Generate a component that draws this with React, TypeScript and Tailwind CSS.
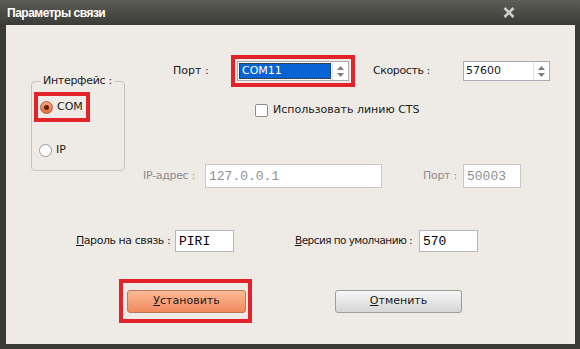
import React from 'react';

const Field: React.FC<{ value: string; className: string; disabled?: boolean }> = ({ value, className, disabled }) => (
  <div
    className={`flex items-center pl-[3px] bg-white border font-['Liberation_Mono',monospace] text-[13px] leading-none ${
      disabled ? 'border-[#c9c9c9] text-[#8f8f8f]' : 'border-[#b4b7bb] text-black'
    } ${className}`}
  >
    {value}
  </div>
);

const Spinner: React.FC = () => (
  <div className="flex flex-col items-center justify-center gap-[3px] w-[16px] h-full border-l border-[#e3e3e3]">
    <svg width="7" height="4" viewBox="0 0 7 4">
      <path d="M0 4 L3.5 0 L7 4 Z" fill="#7d7d7d" />
    </svg>
    <svg width="7" height="4" viewBox="0 0 7 4">
      <path d="M0 0 L3.5 4 L7 0 Z" fill="#7d7d7d" />
    </svg>
  </div>
);

const App: React.FC = () => {
  return (
    <div className="w-[580px] h-[349px] flex flex-col bg-[#3a3a36] font-['DejaVu_Sans',sans-serif] text-[11px] text-[#1a1a1a] whitespace-nowrap">
      {/* title bar */}
      <div className="h-[25px] flex items-center justify-between pl-[7px] pr-[65px] bg-gradient-to-b from-[#5d5d58] to-[#3b3b37]">
        <span className="text-white font-bold text-[12px] tracking-[-0.5px] font-['Liberation_Sans',sans-serif]">Параметры связи</span>
        <svg width="12" height="11" viewBox="0 0 12 11">
          <path d="M1.5 1 L10.5 10 M10.5 1 L1.5 10" stroke="#cfcfcf" strokeWidth="2.6" />
        </svg>
      </div>

      <div className="ml-[6px] w-[569px] h-[319px] bg-[#eeebe6] pt-[30px]">
        {/* top section */}
        <div className="flex">
          {/* interface group */}
          <div className="relative ml-[25px] mt-[26px] w-[94px] h-[90px] border border-[#c7c4bf] rounded-[4px] shrink-0">
            <span className="absolute -top-[8px] left-[9px] px-[2px] bg-[#eeebe6] leading-[14px] tracking-[-0.3px]">Интерфейс :</span>
            <div className="ml-[2px] mt-[10px] w-[56px] h-[30px] border-[4px] border-[#e2232a] flex items-center pl-[2px]">
              <span className="w-[13px] h-[13px] rounded-full border border-[#b3593a] bg-gradient-to-b from-[#f6a57e] to-[#e46d3e] flex items-center justify-center">
                <span className="w-[5px] h-[5px] rounded-full bg-[#5e2410]" />
              </span>
              <span className="ml-[4px]">COM</span>
            </div>
            <div className="ml-[7px] mt-[20px] flex items-center">
              <span className="w-[13px] h-[13px] rounded-full border border-[#9a9a9a] bg-white" />
              <span className="ml-[4px]">IP</span>
            </div>
          </div>

          {/* right column */}
          <div className="flex flex-col">
            <div className="flex items-center h-[32px]">
              <span className="ml-[48px] w-[58px]">Порт :</span>
              <div className="w-[124px] h-[32px] border-[4px] border-[#e2232a] p-[2px]">
                <div className="flex h-full bg-white border border-[#a9adb3]">
                  <div className="flex-1 p-[1px]">
                    <div className="h-full bg-[#0a63d2] border border-dotted border-[#1d2d44] text-white flex items-center pl-[2px]">
                      COM11
                    </div>
                  </div>
                  <Spinner />
                </div>
              </div>
              <span className="ml-[18px] w-[90px] tracking-[-0.4px]">Скорость :</span>
              <div className="flex w-[87px] h-[20px] bg-white border border-[#a9adb3]">
                <span className="flex-1 flex items-center pl-[2px]">57600</span>
                <Spinner />
              </div>
            </div>

            <div className="flex items-center ml-[130px] mt-[17px] h-[13px]">
              <span className="w-[13px] h-[13px] rounded-[2px] border border-[#8e8e8e] bg-white" />
              <span className="ml-[5px]">Использовать линию CTS</span>
            </div>

            <div className="flex items-center ml-[18px] mt-[47px] text-[#8d8d8d]">
              <span className="w-[62px] tracking-[-0.3px]">IP-адрес :</span>
              <Field value="127.0.0.1" disabled className="w-[177px] h-[24px]" />
              <span className="ml-[41px] w-[40px] tracking-[-0.3px]">Порт :</span>
              <Field value="50003" disabled className="w-[58px] h-[24px]" />
            </div>
          </div>
        </div>

        {/* password row */}
        <div className="flex items-center mt-[42px] pl-[70px]">
          <span className="w-[99px] tracking-[-0.45px]">
            <span className="underline">П</span>ароль на связь :
          </span>
          <Field value="PIRI" className="w-[59px] h-[22px]" />
          <span className="ml-[61px] w-[124px] text-[10.5px] tracking-[-0.55px]">
            <span className="underline">В</span>ерсия по умолчанию :
          </span>
          <Field value="570" className="w-[59px] h-[22px]" />
        </div>

        {/* buttons */}
        <div className="flex items-center mt-[27px] ml-[113px]">
          <div className="w-[133px] h-[44px] border-[4px] border-[#e2232a] pl-[4px] pr-[2px] pt-[7px] pb-[6px]">
            <button className="w-full h-full rounded-[3px] border border-[#b9785c] bg-gradient-to-b from-[#fbb995] to-[#f08a5d] flex items-center justify-center">
              <span><span className="underline">У</span>становить</span>
            </button>
          </div>
          <button className="ml-[83px] w-[127px] h-[23px] rounded-[3px] border border-[#9c9c9c] bg-gradient-to-b from-[#f7f7f7] to-[#d6d6d6] flex items-center justify-center">
            <span><span className="underline">О</span>тменить</span>
          </button>
        </div>
      </div>
    </div>
  );
};

export default App;
